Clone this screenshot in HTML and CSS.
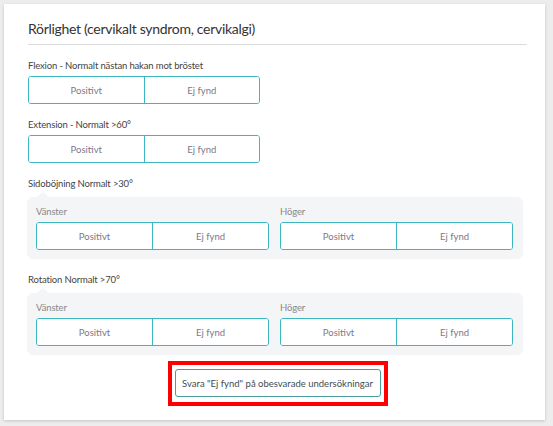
FILE: index.html
```html
<!DOCTYPE html>
<html lang="sv">
<head>
    <meta charset="UTF-8">
    <meta name="viewport" content="width=device-width, initial-scale=1.0">
    <title>Rörlighet</title>
    <link rel="stylesheet" href="styles.css">
</head>
<body>
    <div class="card">
        <h2 class="card-title">Rörlighet (cervikalt syndrom, cervikalgi)</h2>

        <div class="field">
            <p class="field-label">Flexion - Normalt nästan hakan mot bröstet</p>
            <div class="choice">
                <button>Positivt</button>
                <button>Ej fynd</button>
            </div>
        </div>

        <div class="field">
            <p class="field-label">Extension - Normalt &gt;60°</p>
            <div class="choice">
                <button>Positivt</button>
                <button>Ej fynd</button>
            </div>
        </div>

        <div class="field">
            <p class="field-label">Sidoböjning Normalt &gt;30°</p>
            <div class="sides">
                <div class="side">
                    <p class="side-label">Vänster</p>
                    <div class="choice">
                        <button>Positivt</button>
                        <button>Ej fynd</button>
                    </div>
                </div>
                <div class="side">
                    <p class="side-label">Höger</p>
                    <div class="choice">
                        <button>Positivt</button>
                        <button>Ej fynd</button>
                    </div>
                </div>
            </div>
        </div>

        <div class="field">
            <p class="field-label">Rotation Normalt &gt;70°</p>
            <div class="sides">
                <div class="side">
                    <p class="side-label">Vänster</p>
                    <div class="choice">
                        <button>Positivt</button>
                        <button>Ej fynd</button>
                    </div>
                </div>
                <div class="side">
                    <p class="side-label">Höger</p>
                    <div class="choice">
                        <button>Positivt</button>
                        <button>Ej fynd</button>
                    </div>
                </div>
            </div>
        </div>

        <div class="actions">
            <div class="highlight">
                <button class="fill-btn">Svara "Ej fynd" på obesvarade undersökningar</button>
            </div>
        </div>
    </div>
</body>
</html>
```

FILE: styles.css
```css
body {
    margin: 0;
    padding: 4px;
    background-color: #ededed;
    font-family: Lato, "Open Sans", sans-serif;
}

.card {
    width: 541px;
    height: 416px;
    box-sizing: border-box;
    background-color: #fff;
    box-shadow: 0 1px 3px rgba(0, 0, 0, 0.18);
    padding: 15px 18px 0 24px;
}

.card-title {
    margin: 0;
    font-size: 14px;
    font-weight: 400;
    letter-spacing: -0.3px;
    line-height: 20px;
    color: #333;
    padding-bottom: 5px;
    border-bottom: 1px solid #dcdcdc;
}

.field {
    margin-top: 14px;
}

.field-label {
    margin: 0 0 3px;
    font-size: 9.5px;
    letter-spacing: -0.15px;
    line-height: 14px;
    color: #444;
}

.choice {
    display: flex;
    width: 232px;
    height: 28px;
    box-sizing: border-box;
    border: 1.5px solid #3cb7c2;
    border-radius: 3px;
    overflow: hidden;
}

.choice button {
    flex: 1;
    border: none;
    background: #fff;
    font-family: inherit;
    font-size: 9.5px;
    color: #7d788a;
    cursor: pointer;
}

.choice button + button {
    border-left: 1.5px solid #3cb7c2;
}

.sides {
    position: relative;
    display: flex;
    gap: 11px;
    width: 496px;
    box-sizing: border-box;
    margin-top: 6px;
    margin-left: -1px;
    padding: 8px 10px 9px 9px;
    background-color: #f4f5f7;
    border-radius: 6px;
}

/* little arrow pointing up at the label */
.sides::before {
    content: "";
    position: absolute;
    top: -5px;
    left: 10px;
    border-left: 6px solid transparent;
    border-right: 6px solid transparent;
    border-bottom: 5px solid #f4f5f7;
}

.side {
    flex: 1;
}

.side .choice {
    width: 100%;
}

.side-label {
    margin: 0 0 3px;
    font-size: 9.5px;
    letter-spacing: -0.15px;
    line-height: 14px;
    color: #888;
}

.actions {
    display: flex;
    justify-content: center;
    margin-top: 6px;
}

.highlight {
    border: 4px solid #f00;
    padding: 4px 3px 5px;
}

.fill-btn {
    display: block;
    width: 206px;
    height: 28px;
    border: 1.5px solid #4a9c9e;
    border-radius: 3px;
    background: #fff;
    font-family: inherit;
    font-size: 9.5px;
    white-space: nowrap;
    color: #3e4d52;
    cursor: pointer;
}
```
